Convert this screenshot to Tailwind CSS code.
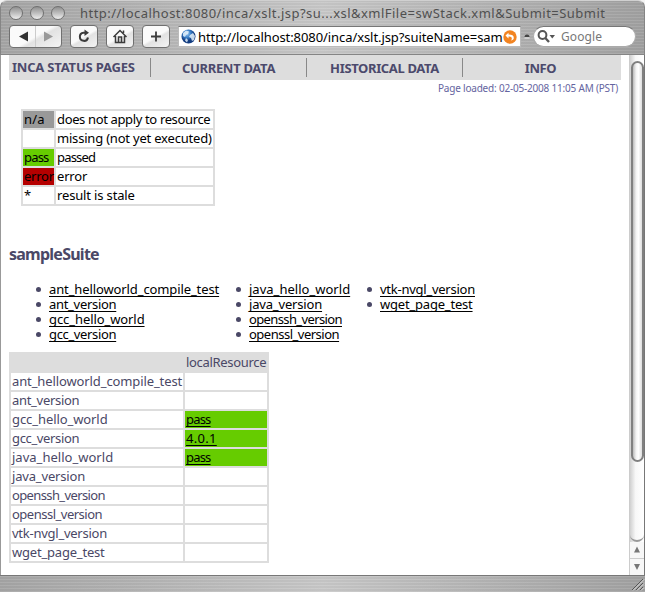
<!DOCTYPE html>
<html lang="en"><head><meta charset="utf-8"><title>INCA Status Pages</title>
<script src="https://cdn.jsdelivr.net/npm/@tailwindcss/browser@4"></script></head>
<body class="bg-white">
<div class="w-[645px] h-[592px] flex flex-col overflow-hidden font-['Noto_Sans',sans-serif] text-[13px] text-[#4a4866] whitespace-nowrap bg-[#f4f4f4]">
  <header class="h-[55px] shrink-0 rounded-t-[7px] border border-[#858585] border-t-[#d0d0d0] bg-[repeating-linear-gradient(0deg,#ffffff12_0px,#ffffff12_1px,#00000008_1px,#00000008_3px),linear-gradient(90deg,#a6a6a6,#c9c9c9_50%,#a2a2a2)]">
    <div class="h-[24px] flex items-center pl-[8px]">
      <div class="flex gap-[7px]">
        <i class="size-[14px] rounded-full border border-[#707070] bg-[linear-gradient(180deg,#909090,#bdbdbd_50%,#eeeeee)]"></i>
        <i class="size-[14px] rounded-full border border-[#707070] bg-[linear-gradient(180deg,#909090,#bdbdbd_50%,#eeeeee)]"></i>
        <i class="size-[14px] rounded-full border border-[#707070] bg-[linear-gradient(180deg,#909090,#bdbdbd_50%,#eeeeee)]"></i>
      </div>
      <span class="ml-[15px] text-[13px] tracking-[0.47px] text-[#505050] leading-[18px]">http://localhost:8080/inca/xslt.jsp?su...xsl&amp;xmlFile=swStack.xml&amp;Submit=Submit</span>
    </div>
    <div class="flex items-center h-[23px] pl-[8px]">
      <div class="w-[53px] h-[23px] flex rounded-[4px] border border-[#707070] bg-[linear-gradient(150deg,#fafafa_50%,#e2e2e2_58%,#f4f4f4)]">
        <svg width="51" height="21" viewBox="0 0 51 21"><path d="M25.500 0v21" stroke="#ccc"/><path d="M9 10.500l9-5v10z" fill="#333"/><path d="M43 10.500l-9-5v10z" fill="#999"/></svg>
      </div>
      <div class="ml-[8px] w-[28px] h-[23px] rounded-[4px] border border-[#707070] bg-[linear-gradient(150deg,#fafafa_50%,#e2e2e2_58%,#f4f4f4)]">
        <svg width="26" height="21" viewBox="0 0 26 21"><path d="M14.500 6.700H12.500a4.100 4.100 0 1 0 4.500 4.800" fill="none" stroke="#3c3c3c" stroke-width="2"/><path d="M13.500 3.500v6.500l4.500-3.200z" fill="#3c3c3c"/></svg>
      </div>
      <div class="ml-[8px] w-[28px] h-[23px] rounded-[4px] border border-[#707070] bg-[linear-gradient(150deg,#fafafa_50%,#e2e2e2_58%,#f4f4f4)]">
        <svg width="26" height="21" viewBox="0 0 26 21" fill="none" stroke="#3c3c3c" stroke-width="1.500"><path d="M6.500 11l6.500-6.500 6.500 6.500M8.500 10v6.500h9V10M16.500 7V4.500"/><path d="M11.500 16.500V11h3v5.500"/></svg>
      </div>
      <div class="ml-[8px] w-[28px] h-[23px] rounded-[4px] border border-[#707070] bg-[linear-gradient(150deg,#fafafa_50%,#e2e2e2_58%,#f4f4f4)]">
        <svg width="26" height="21" viewBox="0 0 26 21"><path d="M13 5.500v10M8 10.500h10" stroke="#3c3c3c" stroke-width="1.800"/></svg>
      </div>
      <div class="ml-[8px] w-[343px] h-[21px] flex items-center bg-white border border-[#bbb] border-t-[#777]">
        <svg class="ml-[2px] shrink-0" width="15" height="15" viewBox="0 0 15 15"><defs><radialGradient id="globe" cx=".4" cy=".3"><stop offset="0" stop-color="#9ac9f2"/><stop offset=".55" stop-color="#397fc8"/><stop offset="1" stop-color="#123c80"/></radialGradient></defs><circle cx="7.500" cy="7.500" r="7" fill="url(#globe)"/><path d="M2 4l3-2.500 3 1-1 2.500-2 1-1 2-2-1zM9 6l3-2 2 3-1 4-2 1-1-3-2-1zM5 9l2 2-1 2.500-2-2z" fill="#e5f2fb" opacity=".85"/></svg>
        <span class="ml-[2px] w-[305px] text-[13px] tracking-[-0.08px] leading-[18px] text-black">http://localhost:8080/inca/xslt.jsp?suiteName=sam</span>
        <svg class="shrink-0" width="14" height="14" viewBox="0 0 14 14"><circle cx="7" cy="7" r="6.700" fill="#f28422"/><path d="M5.500 2.700L2.500 5.600l3 2.900V6.600c2.300-.2 3.400.6 3.300 2.200 0 .8-.5 1.300-1.200 1.700 2-.2 3.200-1.100 3.200-2.600 0-2.300-2-3.400-5.300-3.300z" fill="#fff"/></svg>
      </div>
      <svg class="ml-[2px]" width="8" height="8" viewBox="0 0 8 8"><path d="M1.500 4a2.500 2.500 0 0 1 5 0z" fill="#444"/><path d="M1.500 5h5" stroke="#eee"/></svg>
      <div class="ml-[2px] w-[103px] h-[21px] rounded-full flex items-center bg-white border border-[#aaa] border-t-[#777]">
        <svg class="ml-[3px]" width="20" height="15" viewBox="0 0 20 15"><circle cx="5.500" cy="6" r="3.900" fill="none" stroke="#555" stroke-width="2"/><path d="M8.300 9l3.700 4" stroke="#555" stroke-width="2.300"/><path d="M12.500 6h5.500l-2.750 3.500z" fill="#555"/></svg>
        <span class="ml-[4px] text-[12px] tracking-[0.1px] text-[#777]">Google</span>
      </div>
    </div>
  </header>
  <div class="h-[520px] flex border-l border-[#999] bg-white">
    <main class="w-[628px] h-[520px] pl-[8px]">
      <nav class="w-[612px] h-[25px] grid grid-cols-[141px_156px_156px_159px] items-center bg-[#ddd] text-[13px] leading-[25px] font-bold text-[#4c4a6c]">
        <span class="pl-[3px] tracking-[-0.2px]">INCA STATUS PAGES</span>
        <span class="h-[19px] leading-[20px] border-l border-[#888] text-center tracking-[-0.31px]">CURRENT DATA</span>
        <span class="h-[19px] leading-[20px] border-l border-[#888] text-center tracking-[-0.36px]">HISTORICAL DATA</span>
        <span class="h-[19px] leading-[20px] border-l border-[#888] text-center tracking-[-0.4px] pr-[3px]">INFO</span>
      </nav>
      <p class="w-[609px] h-[29px] pt-[1px] text-right text-[10px] leading-[15px] tracking-[-0.2px] text-[#6464a0]"><span>Page loaded: 02-05-2008 11:05 AM (PST)</span></p>
      <div class="ml-[12px] w-[194px] grid grid-cols-[31px_157px] auto-rows-[17px] gap-[2px] p-[2px] bg-[#ddd] text-black leading-[17px]">
        <span class="bg-[#999] pl-px tracking-[0.2px]">n/a</span><span class="bg-white pl-px tracking-[-0.36px]">does not apply to resource</span>
        <span class="bg-white"></span><span class="bg-white pl-px tracking-[-0.2px]">missing (not yet executed)</span>
        <span class="bg-[#6c0] pl-px tracking-[-0.8px]">pass</span><span class="bg-white pl-px tracking-[-0.8px]">passed</span>
        <span class="bg-[#b50000] pl-px tracking-[-0.25px]">error</span><span class="bg-white pl-px tracking-[-0.2px]">error</span>
        <span class="bg-white pl-px">*</span><span class="bg-white pl-px tracking-[-0.15px]">result is stale</span>
      </div>
      <h2 class="mt-[37px] h-[22px] text-[16px] leading-[22px] font-bold tracking-[-0.75px]"><span>sampleSuite</span></h2>
      <div class="mt-[17px] h-[70px] flex text-black leading-[15px]">
        <ul class="w-[200px] pl-[27px] [&_li]:flex [&_li]:items-center [&_i]:shrink-0 [&_i]:size-[5px] [&_i]:rounded-full [&_i]:bg-[#4a4866] [&_i]:mr-[8px] [&_a]:underline [&_a]:underline-offset-[2px] [&_a]:[text-decoration-skip-ink:none]">
          <li><i></i><a class="tracking-[-0.11px]">ant_helloworld_compile_test</a></li><li><i></i><a class="tracking-[-0.3px]">ant_version</a></li><li><i></i><a class="tracking-[-0.08px]">gcc_hello_world</a></li><li><i></i><a class="tracking-[-0.35px]">gcc_version</a></li>
        </ul>
        <ul class="w-[131px] pl-[27px] [&_li]:flex [&_li]:items-center [&_i]:shrink-0 [&_i]:size-[5px] [&_i]:rounded-full [&_i]:bg-[#4a4866] [&_i]:mr-[8px] [&_a]:underline [&_a]:underline-offset-[2px] [&_a]:[text-decoration-skip-ink:none]">
          <li><i></i><a class="tracking-[0.02px]">java_hello_world</a></li><li><i></i><a class="tracking-[-0.17px]">java_version</a></li><li><i></i><a class="tracking-[-0.62px]">openssh_version</a></li><li><i></i><a class="tracking-[-0.5px]">openssl_version</a></li>
        </ul>
        <ul class="w-[200px] pl-[27px] [&_li]:flex [&_li]:items-center [&_i]:shrink-0 [&_i]:size-[5px] [&_i]:rounded-full [&_i]:bg-[#4a4866] [&_i]:mr-[8px] [&_a]:underline [&_a]:underline-offset-[2px] [&_a]:[text-decoration-skip-ink:none]">
          <li><i></i><a class="tracking-[-0.25px]">vtk-nvgl_version</a></li><li><i></i><a class="tracking-[-0.2px]">wget_page_test</a></li>
        </ul>
      </div>
      <div class="w-[260px] grid grid-cols-[172px_82px] auto-rows-[17px] gap-[2px] p-[2px] bg-[#ddd] leading-[17px]">
        <span></span><span class="pl-px tracking-[-0.32px]">localResource</span>
        <span class="bg-white pl-px tracking-[-0.11px]">ant_helloworld_compile_test</span><span class="bg-white"></span>
        <span class="bg-white pl-px tracking-[-0.3px]">ant_version</span><span class="bg-white"></span>
        <span class="bg-white pl-px tracking-[-0.08px]">gcc_hello_world</span><a class="bg-[#6c0] pl-px text-black underline underline-offset-[2px] [text-decoration-skip-ink:none] tracking-[-0.8px]">pass</a>
        <span class="bg-white pl-px tracking-[-0.35px]">gcc_version</span><a class="bg-[#6c0] pl-px text-black underline underline-offset-[2px] [text-decoration-skip-ink:none] tracking-[0.3px]">4.0.1</a>
        <span class="bg-white pl-px tracking-[0.02px]">java_hello_world</span><a class="bg-[#6c0] pl-px text-black underline underline-offset-[2px] [text-decoration-skip-ink:none] tracking-[-0.8px]">pass</a>
        <span class="bg-white pl-px tracking-[-0.17px]">java_version</span><span class="bg-white"></span>
        <span class="bg-white pl-px tracking-[-0.62px]">openssh_version</span><span class="bg-white"></span>
        <span class="bg-white pl-px tracking-[-0.5px]">openssl_version</span><span class="bg-white"></span>
        <span class="bg-white pl-px tracking-[-0.25px]">vtk-nvgl_version</span><span class="bg-white"></span>
        <span class="bg-white pl-px tracking-[-0.2px]">wget_page_test</span><span class="bg-white"></span>
      </div>
    </main>
    <aside class="w-[16px] h-[520px] flex flex-col items-center border-x border-[#ccc] border-r-[#777] bg-[linear-gradient(90deg,#d0d0d0,#f8f8f8_40%,#fff)]">
      <div class="mt-[6px] w-[13px] h-[401px] rounded-full border-2 border-[#808080] bg-[linear-gradient(90deg,#bbb,#f3f3f3_35%,#fff_60%,#ddd)]"></div>
      <div class="w-[14px] h-[80px] rounded-b-full border-b-2 border-[#999]"></div>
      <svg class="bg-[#f7f7f7]" width="14" height="33" viewBox="0 0 14 33"><path d="M0 16.500h14" stroke="#ccc"/><path d="M7 4.500l3 6H4zM7 28l3-6H4z" fill="#777"/></svg>
    </aside>
  </div>
  <footer class="h-[17px] flex justify-end border-t border-[#777] bg-[repeating-linear-gradient(0deg,#ffffff12_0px,#ffffff12_1px,#00000008_1px,#00000008_3px),linear-gradient(90deg,#a6a6a6,#c9c9c9_50%,#a2a2a2)]">
    <svg width="14" height="16" viewBox="0 0 14 16"><path d="M1 14L12 3M5 14l7-7M9 14l3-3" stroke="#555"/><path d="M2 14.500L13 3.500M6 14.500l7-7M10 14.500l3-3" stroke="#eee" stroke-width=".7"/></svg>
  </footer>
</div>
</body></html>
